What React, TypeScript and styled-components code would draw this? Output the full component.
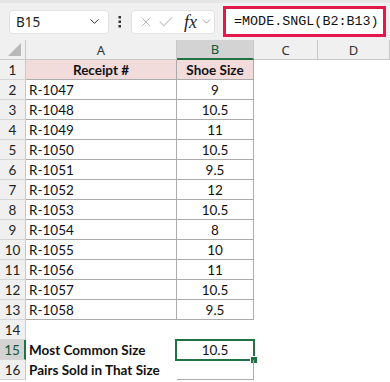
import React from "react";
import styled, { createGlobalStyle, css } from "styled-components";
import { ChevronDown, X, Check } from "lucide-react";

type ROW = {
    num: number;
    a: string;
    b: string;
};

const rows: ROW[] = [
    { num: 2, a: "R-1047", b: "9" },
    { num: 3, a: "R-1048", b: "10.5" },
    { num: 4, a: "R-1049", b: "11" },
    { num: 5, a: "R-1050", b: "10.5" },
    { num: 6, a: "R-1051", b: "9.5" },
    { num: 7, a: "R-1052", b: "12" },
    { num: 8, a: "R-1053", b: "10.5" },
    { num: 9, a: "R-1054", b: "8" },
    { num: 10, a: "R-1055", b: "10" },
    { num: 11, a: "R-1056", b: "11" },
    { num: 12, a: "R-1057", b: "10.5" },
    { num: 13, a: "R-1058", b: "9.5" },
];

const GlobalStyle = createGlobalStyle`
    html, body {
        margin: 0;
        padding: 0;
        background: #ffffff;
    }
    body {
        font-family: "Lato", "Liberation Sans", sans-serif;
        width: 390px;
        height: 382px;
        overflow: hidden;
    }
`;

const App: React.FC = () => {
    return (
        <>
            <GlobalStyle />
            <SSheet>
                <SToolbar>
                    <SNameBox>
                        <span>B15</span>
                        <ChevronDown size={15} strokeWidth={1.6} color="#333" />
                    </SNameBox>
                    <SDots>
                        <svg width="4" height="12" viewBox="0 0 4 12">
                            <rect x="0.5" y="0" width="2.5" height="2.5" fill="#333" />
                            <rect x="0.5" y="4.5" width="2.5" height="2.5" fill="#333" />
                            <rect x="0.5" y="9" width="2.5" height="2.5" fill="#333" />
                        </svg>
                    </SDots>
                    <SFxBox>
                        <SIcon>
                            <X size={16} strokeWidth={1.5} color="#b8b8b8" />
                        </SIcon>
                        <SIcon $ml={3}>
                            <Check size={18} strokeWidth={1.4} color="#b8b8b8" />
                        </SIcon>
                        <SFx>fx</SFx>
                        <SIcon $ml={3}>
                            <ChevronDown size={13} strokeWidth={1.5} color="#8a8a8a" />
                        </SIcon>
                    </SFxBox>
                    <SFormula>=MODE.SNGL(B2:B13)</SFormula>
                </SToolbar>

                <SRow>
                    <SCorner>
                        <svg width="13" height="13" viewBox="0 0 13 13">
                            <polygon points="13,0 13,13 0,13" fill="#b8b8b8" />
                        </svg>
                    </SCorner>
                    <SColHead $w={151}>A</SColHead>
                    <SColHead $w={77} $active>
                        B
                    </SColHead>
                    <SColHead $w={64}>C</SColHead>
                    <SColHead $w={72}>D</SColHead>
                </SRow>

                <SRow>
                    <SRowHead>1</SRowHead>
                    <SCell $w={151} $head $grid $center>
                        Receipt #
                    </SCell>
                    <SCell $w={77} $head $grid $center>
                        Shoe Size
                    </SCell>
                </SRow>

                {rows.map((r) => (
                    <SRow key={r.num}>
                        <SRowHead>{r.num}</SRowHead>
                        <SCell $w={151} $grid>
                            {r.a}
                        </SCell>
                        <SCell $w={77} $grid $center>
                            {r.b}
                        </SCell>
                    </SRow>
                ))}

                <SRow>
                    <SRowHead>14</SRowHead>
                </SRow>

                <SRow>
                    <SRowHead $active>15</SRowHead>
                    <SCell $w={151} $bold>
                        Most Common Size
                    </SCell>
                    <SCell $w={77} $center>
                        10.5
                        <SSelection>
                            <SHandle />
                        </SSelection>
                    </SCell>
                </SRow>

                <SRow>
                    <SRowHead>16</SRowHead>
                    <SCell $w={151} $bold>
                        Pairs Sold in That Size
                    </SCell>
                    <SCell $w={77} $grid $center></SCell>
                </SRow>
            </SSheet>
        </>
    );
};

const SSheet = styled.div`
    width: 390px;
    height: 382px;
    background: #ffffff;
`;

const SToolbar = styled.div`
    display: flex;
    align-items: center;
    height: 40px;
    box-sizing: border-box;
    padding: 0 4px 0 9px;
    background: #f0f0f0;
    border-top: 3px solid #e6e6e6;
`;

const SNameBox = styled.div`
    display: flex;
    align-items: center;
    justify-content: space-between;
    width: 100px;
    height: 24px;
    flex-shrink: 0;
    box-sizing: border-box;
    padding: 0 6px 0 6px;
    background: #ffffff;
    border: 1px solid #e2e2e2;
    border-radius: 4px;
    font-family: "Noto Sans", "Liberation Sans", sans-serif;
    font-size: 13.5px;
    color: #222;
`;

const SDots = styled.div`
    display: flex;
    align-items: center;
    justify-content: center;
    width: 22px;
    height: 24px;
    flex-shrink: 0;
`;

const SFxBox = styled.div`
    display: flex;
    align-items: center;
    width: 84px;
    height: 24px;
    flex-shrink: 0;
    box-sizing: border-box;
    padding: 0 0 0 6px;
    background: #ffffff;
    border: 1px solid #e2e2e2;
    border-radius: 4px;
`;

const SIcon = styled.span<{ $ml?: number }>`
    display: flex;
    align-items: center;
    flex-shrink: 0;
    margin-left: ${(p) => p.$ml ?? 0}px;
`;

const SFx = styled.span`
    flex-shrink: 0;
    font-family: "Liberation Serif", serif;
    font-style: italic;
    font-size: 18px;
    color: #222;
    margin-left: 9px;
    line-height: 1;
`;

const SFormula = styled.div`
    flex: 1;
    display: flex;
    align-items: center;
    height: 31px;
    margin-left: 8px;
    box-sizing: border-box;
    padding-left: 8px;
    background: #ffffff;
    border: 3px solid #e3184d;
    font-family: "Liberation Mono", monospace;
    font-size: 13.4px;
    color: #111;
    white-space: nowrap;
`;

const SRow = styled.div`
    display: flex;
    height: 20px;
`;

const SCorner = styled.div`
    width: 26px;
    height: 20px;
    box-sizing: border-box;
    display: flex;
    align-items: flex-end;
    justify-content: flex-end;
    padding: 0 4px 3px 0;
    background: #f0f0f0;
    border-right: 1px solid #c8c8c8;
    border-bottom: 1px solid #c8c8c8;
`;

const SColHead = styled.div<{ $w: number; $active?: boolean }>`
    width: ${(p) => p.$w}px;
    height: 20px;
    box-sizing: border-box;
    display: flex;
    align-items: center;
    justify-content: center;
    background: #f0f0f0;
    border-right: 1px solid #c8c8c8;
    border-bottom: 1px solid #c8c8c8;
    font-family: "Noto Sans", "Liberation Sans", sans-serif;
    font-size: 13px;
    color: #333;
    ${(p) =>
        p.$active &&
        css`
            background: #d3d3d3;
            border-bottom: 2px solid #217346;
            color: #0f5a35;
        `}
`;

const SRowHead = styled.div<{ $active?: boolean }>`
    width: 26px;
    height: 20px;
    flex-shrink: 0;
    box-sizing: border-box;
    display: flex;
    align-items: center;
    justify-content: center;
    background: #f0f0f0;
    border-right: 1px solid #c8c8c8;
    border-bottom: 1px solid #d6d6d6;
    font-size: 13.5px;
    color: #222;
    ${(p) =>
        p.$active &&
        css`
            background: #d3d3d3;
            border-right: 2px solid #217346;
            color: #0f5a35;
        `}
`;

const SCell = styled.div<{
    $w: number;
    $grid?: boolean;
    $head?: boolean;
    $center?: boolean;
    $bold?: boolean;
}>`
    position: relative;
    width: ${(p) => p.$w}px;
    height: 20px;
    flex-shrink: 0;
    box-sizing: border-box;
    display: flex;
    align-items: center;
    justify-content: ${(p) => (p.$center ? "center" : "flex-start")};
    padding: 0 3px;
    font-size: 13.5px;
    color: #111;
    white-space: nowrap;
    font-weight: ${(p) => (p.$bold || p.$head ? 700 : 400)};
    border-right: 1px solid ${(p) => (p.$grid ? "#ababab" : "transparent")};
    border-bottom: 1px solid ${(p) => (p.$grid ? "#ababab" : "transparent")};
    background: ${(p) => (p.$head ? "#f2dcdb" : "transparent")};
`;

const SSelection = styled.div`
    position: absolute;
    left: -2px;
    top: -1px;
    right: -2px;
    bottom: -2px;
    border: 2px solid #217346;
    pointer-events: none;
`;

const SHandle = styled.div`
    position: absolute;
    right: -5px;
    bottom: -5px;
    width: 6px;
    height: 6px;
    background: #217346;
    border: 1px solid #ffffff;
`;

export default App;
